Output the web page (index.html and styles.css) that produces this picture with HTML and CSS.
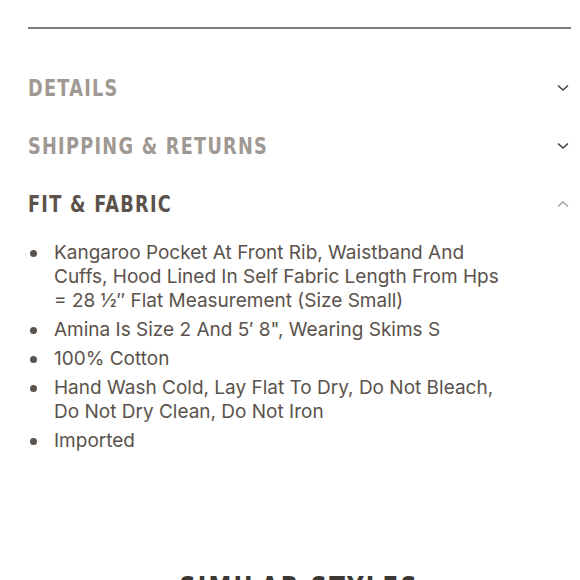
FILE: index.html
```html
<!DOCTYPE html>
<html lang="en">
<head>
<meta charset="utf-8">
<title>Product details</title>
<link rel="stylesheet" href="styles.css">
</head>
<body>
<div class="page">
  <hr class="rule">
  <section class="accordion">
    <div class="acc-row">
      <h2 class="acc-title">DETAILS</h2>
      <svg class="chev chev-down" width="12" height="8" viewBox="0 0 12 8"><path d="M1 1.5 L6 6 L11 1.5" fill="none" stroke="currentColor" stroke-width="1.6"/></svg>
    </div>
    <div class="acc-row">
      <h2 class="acc-title">SHIPPING &amp; RETURNS</h2>
      <svg class="chev chev-down" width="12" height="8" viewBox="0 0 12 8"><path d="M1 1.5 L6 6 L11 1.5" fill="none" stroke="currentColor" stroke-width="1.6"/></svg>
    </div>
    <div class="acc-row open">
      <h2 class="acc-title">FIT &amp; FABRIC</h2>
      <svg class="chev chev-up" width="12" height="8" viewBox="0 0 12 8"><path d="M1 6.5 L6 2 L11 6.5" fill="none" stroke="currentColor" stroke-width="1.4"/></svg>
    </div>
    <ul class="fit-list">
      <li>Kangaroo Pocket At Front Rib, Waistband And<br>Cuffs, Hood Lined In Self Fabric Length From Hps<br>= 28 1⁄2″ Flat Measurement (Size Small)</li>
      <li>Amina Is Size 2 And 5′ 8", Wearing Skims S</li>
      <li>100% Cotton</li>
      <li>Hand Wash Cold, Lay Flat To Dry, Do Not Bleach,<br>Do Not Dry Clean, Do Not Iron</li>
      <li>Imported</li>
    </ul>
  </section>
  <div class="similar-wrap">
    <h2 class="similar">SIMILAR STYLES</h2>
  </div>
</div>
</body>
</html>
```

FILE: styles.css
```css
html, body {
  margin: 0;
  padding: 0;
  background: #ffffff;
}
body {
  font-family: Inter, "Noto Sans", sans-serif;
  overflow: hidden;
  height: 580px;
}
.page {
  padding: 27px 9px 0 28px;
}
.rule {
  border: 0;
  height: 2px;
  margin: 0;
  background: #7f7b77;
}
.accordion {
  padding-top: 30px;
}
.acc-row {
  height: 58px;
  display: flex;
  align-items: center;
  justify-content: space-between;
}
.acc-title {
  margin: 0;
  font-family: "DejaVu Sans Condensed", "DejaVu Sans", sans-serif;
  font-weight: 700;
  font-size: 23px;
  letter-spacing: 1.5px;
  color: #a09893;
  transform: scaleX(0.855);
  transform-origin: left center;
}
.open .acc-title {
  color: #5b524c;
}
.chev {
  display: block;
  margin-right: 2px;
}
.chev-down {
  color: #45403d;
}
.chev-up {
  color: #a19c98;
}
.fit-list {
  list-style: none;
  margin: 8px 0 0;
  padding: 0;
}
.fit-list li {
  position: relative;
  padding-left: 26px;
  font-size: 19px;
  line-height: 24px;
  color: #5a524c;
  margin-bottom: 5px;
}
.fit-list li::before {
  content: "";
  position: absolute;
  left: 2px;
  top: 9px;
  width: 7px;
  height: 7px;
  border-radius: 50%;
  background: #5a524c;
}
.similar-wrap {
  margin-top: 117px;
  display: flex;
  justify-content: center;
}
.similar {
  margin: 0;
  font-family: "DejaVu Sans Condensed", "DejaVu Sans", sans-serif;
  font-weight: 700;
  font-size: 30px;
  letter-spacing: 2.5px;
  color: #3b3734;
  transform: scaleX(0.85);
}
```
